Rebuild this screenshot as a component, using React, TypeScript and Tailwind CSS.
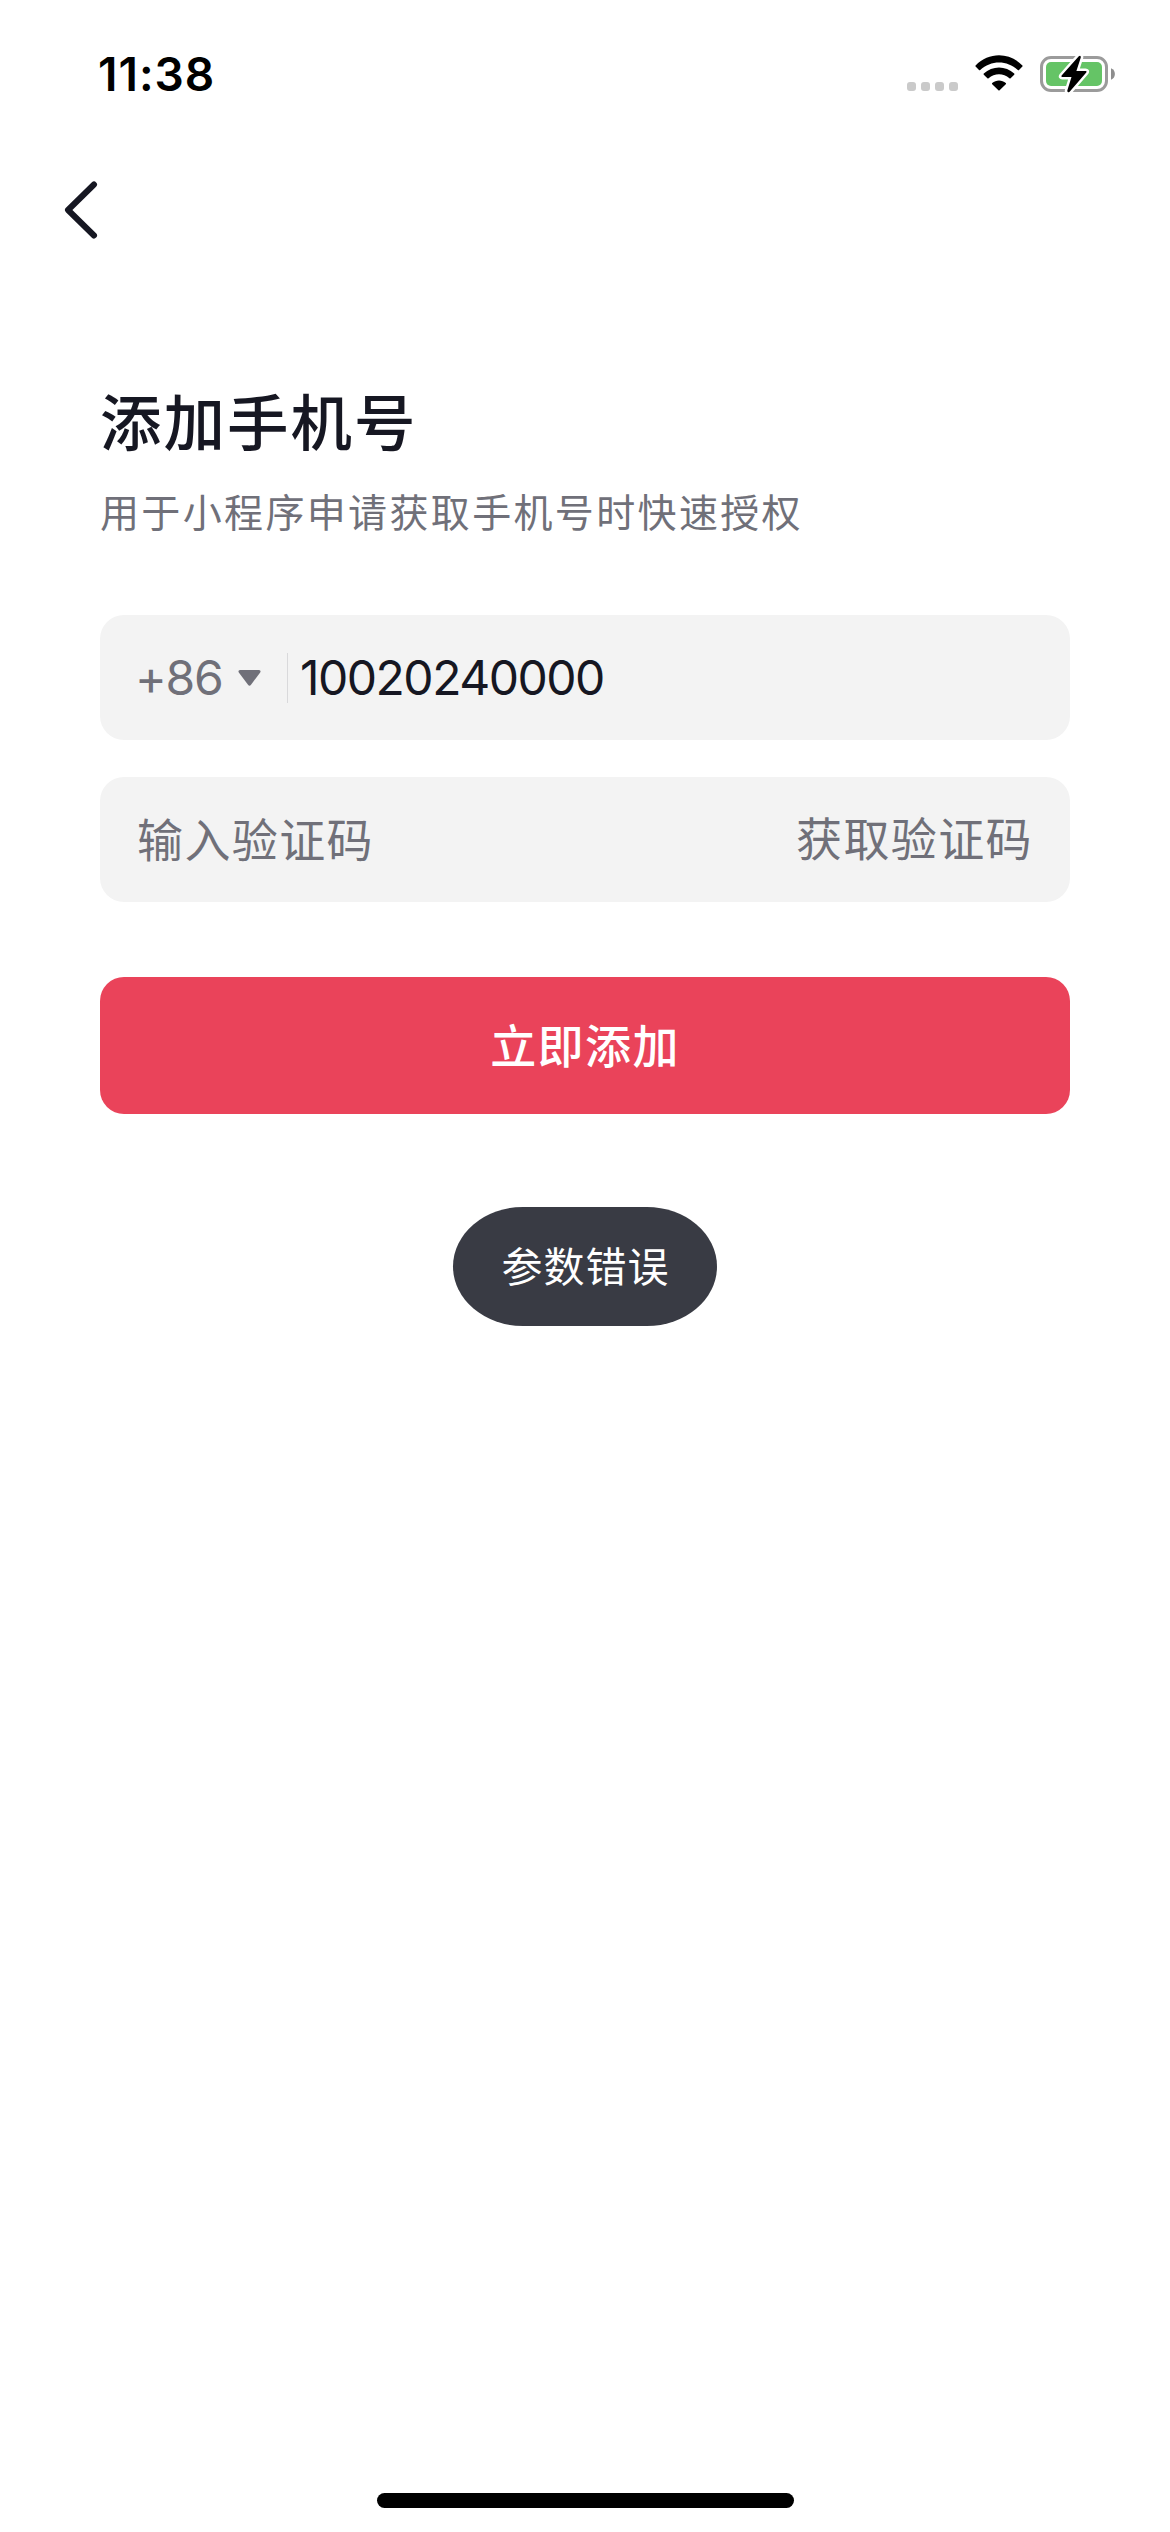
import type { ReactNode } from "react";

function SignalDots() {
  return (
    <div className="mt-[27px] flex gap-[5px]">
      {[0, 1, 2, 3].map((n) => (
        <span key={n} className="size-[9px] rounded-[3px] bg-[#cacaca]" />
      ))}
    </div>
  );
}

function WifiIcon() {
  return (
    <svg className="ml-[17px] h-9 w-12" viewBox="0 0 48 36" aria-hidden>
      <path d="M0.6 10.4C13.8-3.2 34.2-3.2 47.4 10.4Q47.9 11 47.4 11.6L44 15Q43.4 15.6 42.8 15C32.2 4.9 15.8 4.9 5.2 15Q4.6 15.6 4 15L0.6 11.6Q0.1 11 0.6 10.4Z" />
      <path d="M8.8 18.6C17.3 10.4 30.7 10.4 39.2 18.6Q39.8 19.2 39.2 19.8L35.6 23.3Q35 23.9 34.4 23.3C28.5 18 19.5 18 13.6 23.3Q13 23.9 12.4 23.3L8.8 19.8Q8.2 19.2 8.8 18.6Z" />
      <path d="M17.2 28C21 24.5 27 24.5 30.8 28Q31.4 28.6 30.8 29.2L24.6 35.3Q24 35.9 23.4 35.3L17.2 29.2Q16.6 28.6 17.2 28Z" />
    </svg>
  );
}

function BatteryIcon() {
  const bolt =
    "M38.8 1.2L21.6 20.6Q20.6 22 22.3 22H31.5L27.3 35.6Q27.1 37.9 29.4 37L46.3 17.4Q47.2 16 45.5 16H36.4L40.8 2.4Q41 0 38.8 1.2Z";
  return (
    <svg className="ml-[17px] h-[38px] w-[76px]" viewBox="0 0 76 38" aria-hidden>
      <rect
        x="1.5"
        y="2.5"
        width="65"
        height="33"
        rx="9.5"
        fill="none"
        stroke="#9b9b9b"
        strokeWidth="3"
      />
      <rect x="6" y="7" width="56" height="24" rx="5" fill="#65c466" />
      <path d="M71 13.2C76.2 15.2 76.2 22.8 71 24.8Z" fill="#8e8e8e" />
      <path d={bolt} fill="#fff" stroke="#fff" strokeWidth="5" strokeLinejoin="round" />
      <path d={bolt} />
    </svg>
  );
}

function StatusBar() {
  return (
    <header className="flex h-[141px] items-start justify-between pt-[55px] pr-[54px] pl-[98px]">
      <time className="mt-[-1px] text-[46px] leading-10 font-semibold tracking-[1px] text-black">
        11:38
      </time>
      <div className="flex items-start">
        <SignalDots />
        <WifiIcon />
        <BatteryIcon />
      </div>
    </header>
  );
}

function Field({ children }: { children: ReactNode }) {
  return (
    <div className="flex h-[125px] items-center rounded-3xl bg-[#f3f3f3] pr-[37px] pl-[37px] text-[46px] tracking-[1.4px] text-[#707079]">
      {children}
    </div>
  );
}

export default function App() {
  return (
    <div className="flex h-[2532px] w-[1170px] flex-col bg-white font-['Inter','Noto_Sans_CJK_SC',sans-serif] text-[#161722]">
      <StatusBar />

      <nav className="flex h-[138px] items-center pl-16">
        <button type="button" aria-label="返回">
          <svg className="h-[60px] w-9" viewBox="0 0 36 60" fill="none" aria-hidden>
            <path
              d="M30 4.5L4 30L30 55.5"
              stroke="currentColor"
              strokeWidth="6"
              strokeLinecap="round"
              strokeLinejoin="round"
            />
          </svg>
        </button>
      </nav>

      <main className="flex flex-col px-[100px] pt-[105px]">
        <h1 className="text-[61.5px] leading-[80px] font-medium tracking-[2px]">
          添加手机号
        </h1>
        <p className="mt-[19px] text-[39px] leading-[60px] tracking-[2.35px] text-[#707079]">
          用于小程序申请获取手机号时快速授权
        </p>

        <form className="mt-[72px] flex flex-col gap-[37px]">
          <Field>
            <span className="-ml-0.5 w-[103px] text-[48px] tracking-[-1.2px]">+86</span>
            <svg className="h-4 w-[23px]" viewBox="0 0 23 16" fill="currentColor" aria-hidden>
              <path d="M2 0H21Q23.5 0.4 22 2.7L13 14.7Q11.5 16.6 10 14.7L1 2.7Q-0.5 0.4 2 0Z" />
            </svg>
            <span className="ml-[26px] h-[50px] w-px bg-[#d9d9db]" />
            <span className="ml-3 text-[48px] tracking-[-1.5px] text-[#161722]">
              10020240000
            </span>
          </Field>
          <Field>
            <span className="pt-0.5">输入验证码</span>
            <button type="button" className="ml-auto">
              获取验证码
            </button>
          </Field>
          <button
            type="button"
            className="mt-[38px] h-[137px] rounded-3xl bg-[#ea435a] pt-px text-[46px] font-medium tracking-[1.4px] text-white"
          >
            立即添加
          </button>
        </form>
      </main>

      <div
        role="status"
        className="mt-[93px] flex h-[119px] w-[264px] items-center justify-center self-center rounded-[70px/59.5px] bg-[#393b44] pt-0.5 pl-px text-[41px] tracking-[1px] text-white"
      >
        参数错误
      </div>

      <div className="mt-auto mb-6 h-[15px] w-[417px] self-center rounded-full bg-black" />
    </div>
  );
}
